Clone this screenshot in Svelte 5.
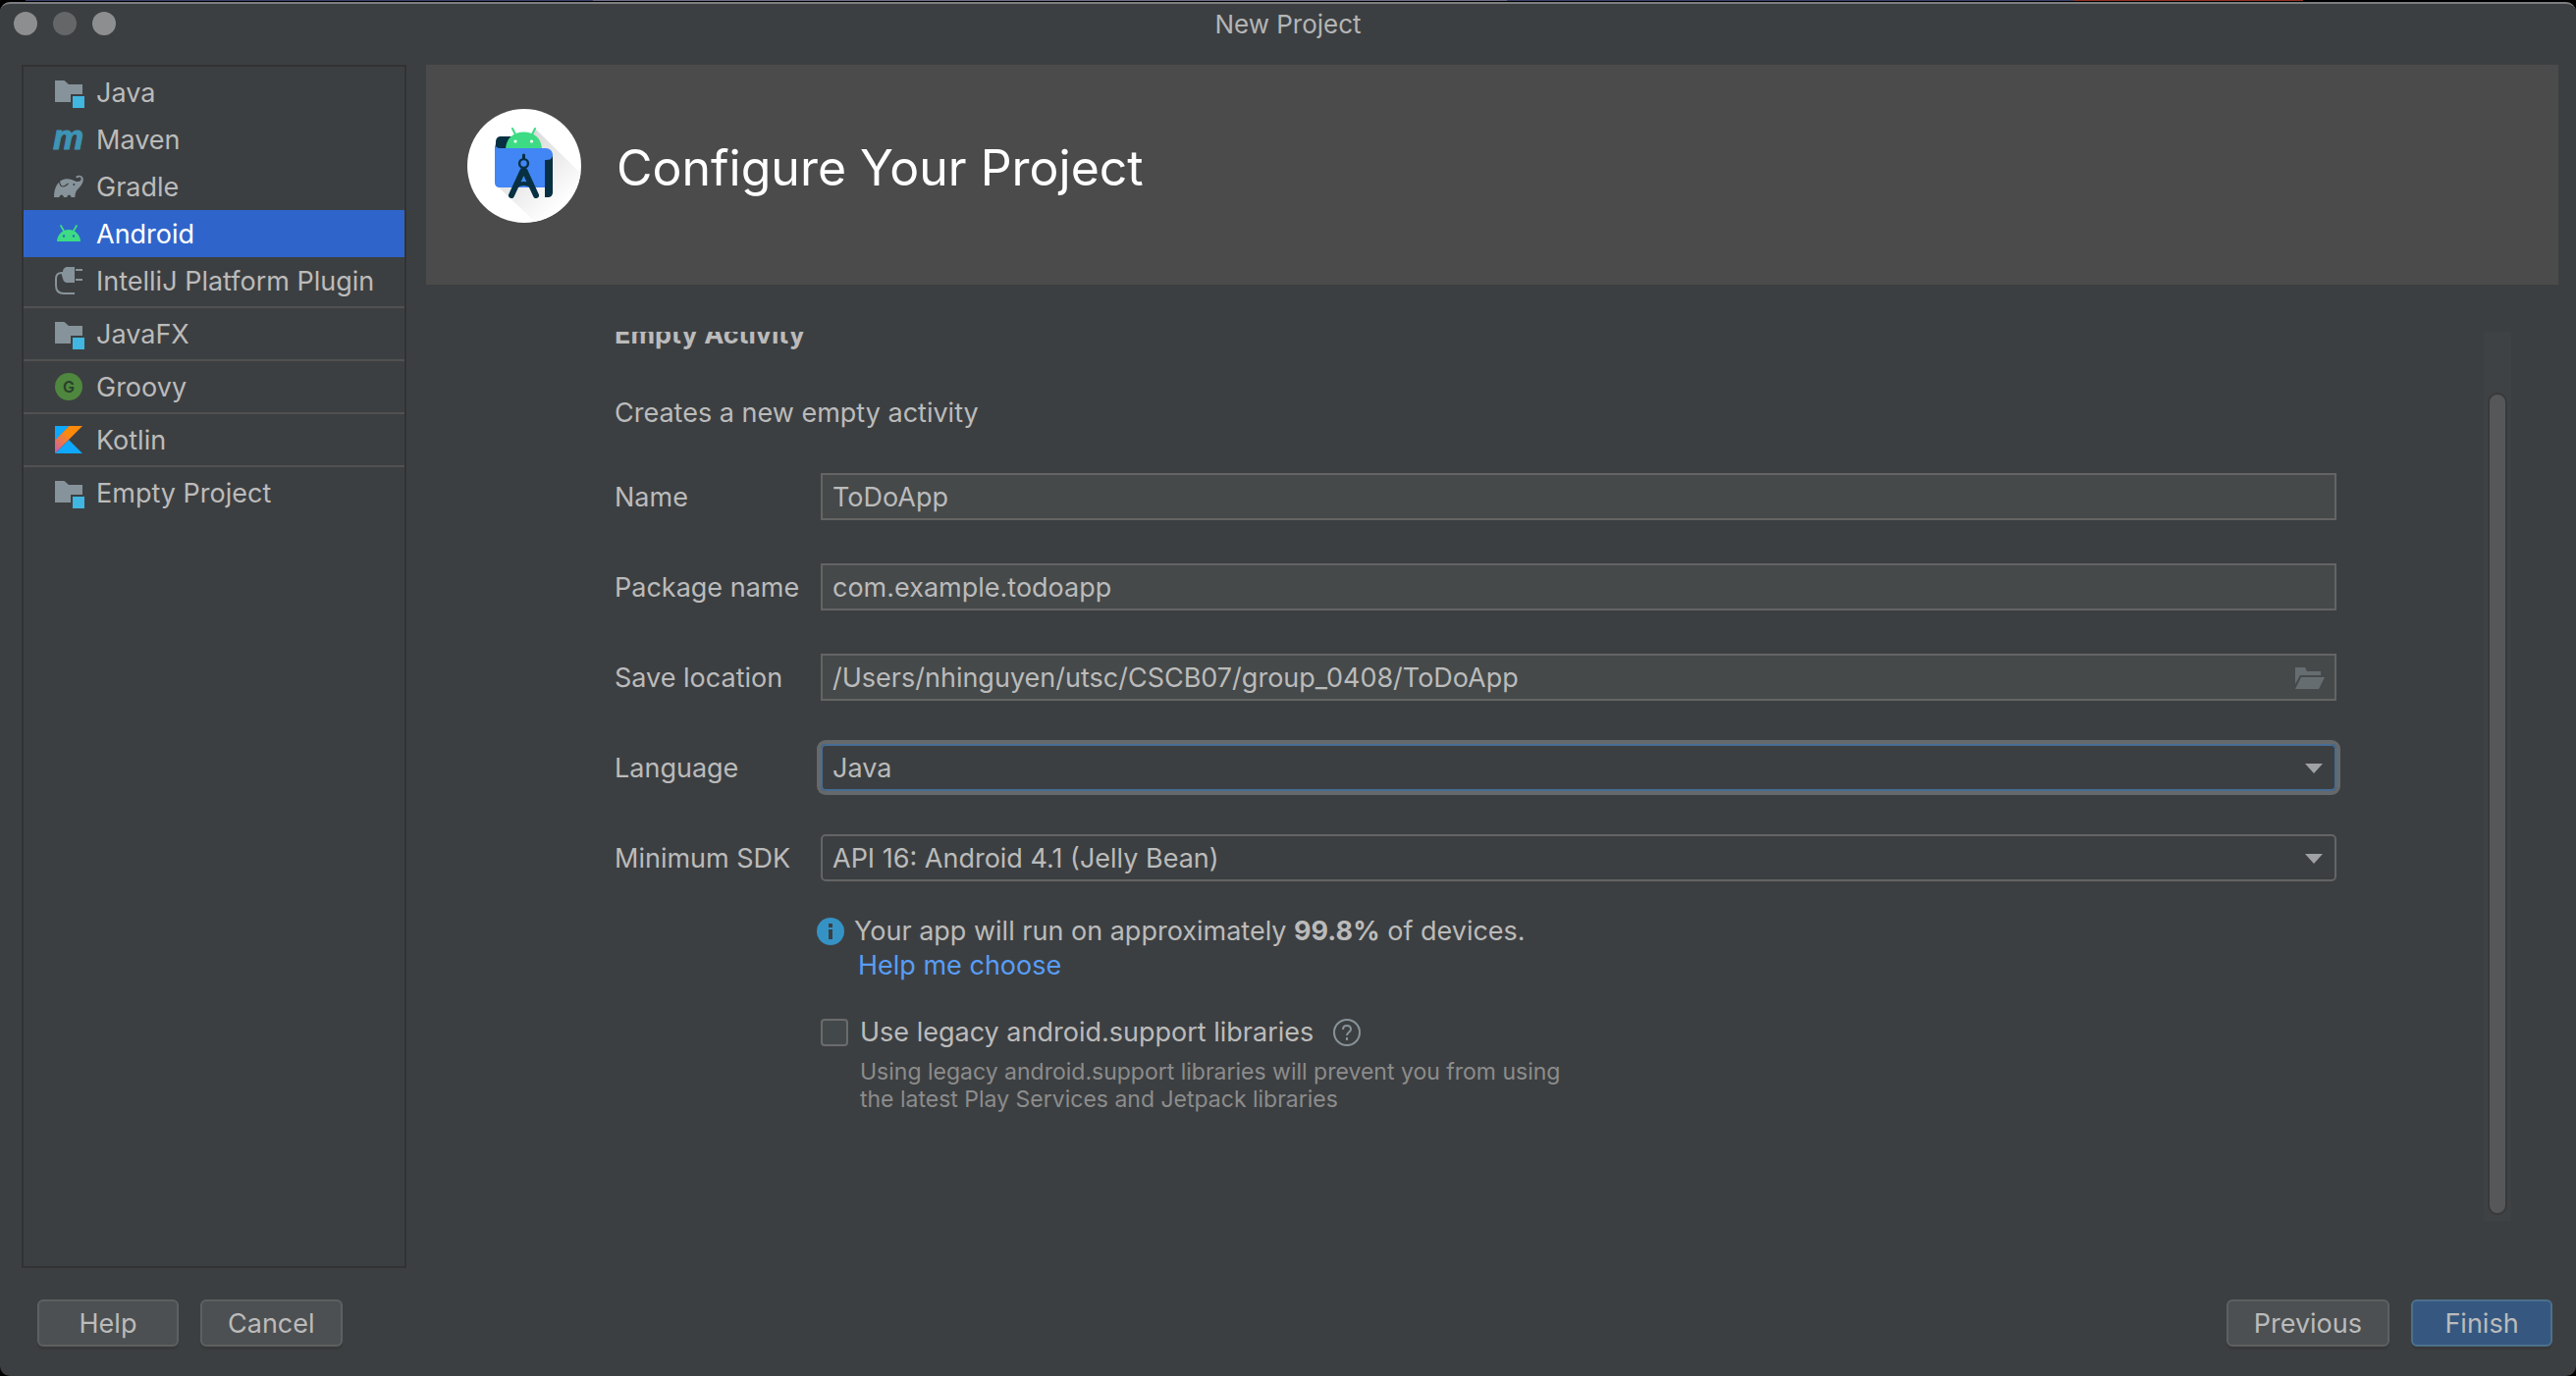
<script>
  const groups = [
    [
      { icon: 'folder', label: 'Java' },
      { icon: 'maven', label: 'Maven' },
      { icon: 'gradle', label: 'Gradle' },
      { icon: 'android', label: 'Android' },
      { icon: 'plugin', label: 'IntelliJ Platform Plugin' }
    ],
    [{ icon: 'folder', label: 'JavaFX' }],
    [{ icon: 'groovy', label: 'Groovy' }],
    [{ icon: 'kotlin', label: 'Kotlin' }],
    [{ icon: 'folder', label: 'Empty Project' }]
  ];
  let selected = $state('Android');
  let name = $state('ToDoApp');
  let packageName = $state('com.example.todoapp');
  let location = $state('/Users/nhinguyen/utsc/CSCB07/group_0408/ToDoApp');
  let language = $state('Java');
  let sdk = $state('API 16: Android 4.1 (Jelly Bean)');
  let legacy = $state(false);
</script>

{#snippet arrow()}
  <svg class="arrow" viewBox="0 0 18 10" aria-hidden="true"><path d="M0 0h18L9 10z" fill="#9fa1a4" /></svg>
{/snippet}

{#snippet itemIcon(kind)}
  <svg class="item-icon" viewBox="0 0 32 32" aria-hidden="true">
    {#if kind === 'folder'}
      <path d="M2 4h9.500l4.500 4h14v10H18v8H2z" fill="#87939a" />
      <path d="M20 20h12v12H20z" fill="#40b6e0" />
    {:else if kind === 'maven'}
      <text x="0" y="26" class="maven">m</text>
    {:else if kind === 'gradle'}
      <path d="M1 27C1 17 5 10 12 8.500C16 7.500 20 9 22.500 10.500C26 12 29 10.500 28.600 8C28.300 6.300 26 6.100 24.700 7.500L23 6.200C25 4 29 4.200 30.500 7C32 11.500 28 16 24.500 19.500C23 21.500 22.500 24 22.300 27H18.600C18 23.500 14.800 23.500 14.200 27H11C10.500 23.500 7 23.500 6.300 27Z" fill="#87939a" />
      <path d="M6.500 11c.5 3.500 1.500 5 3.500 5s4-1.500 5.500-3" fill="none" stroke="#3c3f41" stroke-width="1.200" />
      <circle cx="21.300" cy="14" r="1" fill="#3c3f41" />
    {:else if kind === 'android'}
      <path d="M8 8l3.500 6M24 8l-3.500 6" stroke="#3ddc84" stroke-width="1.800" stroke-linecap="round" />
      <path d="M4 24c.3-7 5.500-12 12-12s11.700 5 12 12z" fill="#3ddc84" />
      <circle cx="11" cy="18.500" r="1.200" fill="#2f65ca" /><circle cx="21" cy="18.500" r="1.200" fill="#2f65ca" />
    {:else if kind === 'plugin'}
      <path d="M22 2v16h-7c-3 0-5-2-5-5V7c0-3 2-5 5-5zM23 4h7v2h-7zM23 14h7v2h-7zM8 7h2v7z" fill="#87939a" />
      <path d="M9 8C5 8 3 10 3 14v7c0 5 3 8 8 8h11" fill="none" stroke="#87939a" stroke-width="2" />
    {:else if kind === 'groovy'}
      <circle cx="16" cy="16" r="14" fill="#4f873f" />
      <text x="16" y="22" class="groovy">G</text>
    {:else}
      <defs>
        <linearGradient id="kotlin-fill" x1="2" y1="30" x2="24" y2="4" gradientUnits="userSpaceOnUse">
          <stop offset="0" stop-color="#c757bc" /><stop offset=".3" stop-color="#e0706a" /><stop offset=".7" stop-color="#ff8a0a" />
        </linearGradient>
      </defs>
      <path d="M2 2h14.500L2 17zM2 30L16 16l14 14z" fill="#0ea9ff" />
      <path d="M16.500 2H30L2 30V16.500z" fill="url(#kotlin-fill)" />
    {/if}
  </svg>
{/snippet}

<div class="screen">
  <div class="backdrop"></div>
  <div class="window">
    <header class="titlebar">
      <div class="lights">
        <button class="light" aria-label="Close window"></button>
        <button class="light dim" aria-label="Minimize window"></button>
        <button class="light" aria-label="Zoom window"></button>
      </div>
      <span class="window-title">New Project</span>
    </header>

    <div class="content">
      <nav class="sidebar" aria-label="Project type">
        {#each groups as group}
          <ul>
            {#each group as item}
              <li>
                <button class="item" class:selected={selected === item.label} onclick={() => (selected = item.label)}>
                  {@render itemIcon(item.icon)}
                  <span>{item.label}</span>
                </button>
              </li>
            {/each}
          </ul>
        {/each}
      </nav>

      <main>
        <div class="banner">
          <svg class="logo" viewBox="0 0 116 116" aria-hidden="true">
            <defs>
              <linearGradient id="long-shadow" x1="30" y1="25" x2="95" y2="100" gradientUnits="userSpaceOnUse">
                <stop offset="0" stop-color="#cfcfcf" /><stop offset="1" stop-color="#ffffff" />
              </linearGradient>
              <clipPath id="disc"><circle cx="58" cy="58" r="58" /></clipPath>
            </defs>
            <circle cx="58" cy="58" r="58" fill="#fff" />
            <path d="M69 20L116 66V116H70L30 78z" fill="url(#long-shadow)" clip-path="url(#disc)" />
            <path d="M34 28h14v14H29V34c0-4 2-6 5-6z" fill="#073042" />
            <path d="M46 20l4 8M69 20l-4 8" stroke="#3ddc84" stroke-width="2" stroke-linecap="round" />
            <path d="M39 42C39 30 47 23.500 57.500 23.500S76 30 76 42z" fill="#3ddc84" />
            <circle cx="49" cy="33" r="1.600" fill="#fff" /><circle cx="65.500" cy="33" r="1.600" fill="#fff" />
            <path d="M28 34c0 4 2 6 6 6h46c4 0 7 3 7 7 0 3-2 5-6 5v28H33c-3 0-5-2-5-5z" fill="#4285f4" />
            <path d="M79 52c5 0 8-1 8-6v39c0 3-2 5-5 5h-3z" fill="#073042" />
            <path d="M57.500 47v6" stroke="#073042" stroke-width="3" stroke-linecap="round" />
            <path d="M56.500 63L45 88M58.500 63L70 88" stroke="#073042" stroke-width="6" stroke-linecap="round" />
            <path d="M49 79c5-4 12-4 17 0" fill="none" stroke="#073042" stroke-width="4" />
            <circle cx="57.500" cy="55.500" r="4.400" fill="#4285f4" stroke="#073042" stroke-width="2.400" />
          </svg>
          <h1>Configure Your Project</h1>
        </div>

        <div class="scroll-pane">
          <form class="form" onsubmit={(e) => e.preventDefault()}>
            <h2>Empty Activity</h2>
            <p class="intro">Creates a new empty activity</p>

            <div class="fields">
              <label for="name">Name</label>
              <div class="control"><input id="name" type="text" bind:value={name} /></div>

              <label for="package">Package name</label>
              <div class="control"><input id="package" type="text" bind:value={packageName} /></div>

              <label for="location">Save location</label>
              <div class="control">
                <input id="location" type="text" bind:value={location} />
                <button type="button" class="browse" aria-label="Browse for folder">
                  <svg viewBox="0 0 30 22" aria-hidden="true">
                    <path d="M0 0h10l2 4h14v4H5L0 17zM6 10h24l-6 12H0z" fill="#666d70" />
                  </svg>
                </button>
              </div>

              <label for="language">Language</label>
              <div class="control">
                <select id="language" class="active" bind:value={language}>
                  <option>Java</option>
                  <option>Kotlin</option>
                </select>
                {@render arrow()}
              </div>

              <label for="sdk">Minimum SDK</label>
              <div class="control">
                <select id="sdk" bind:value={sdk}>
                  <option>API 16: Android 4.1 (Jelly Bean)</option>
                </select>
                {@render arrow()}
              </div>
            </div>

            <div class="notes">
              <div class="info">
                <svg class="round-icon" viewBox="0 0 28 28" aria-hidden="true">
                  <circle cx="14" cy="14" r="14" fill="#3592c4" />
                  <path d="M12 6h4v4h-4zM12 12h4v10h-4z" fill="#3c3f41" />
                </svg>
                <p>Your app will run on approximately <strong>99.8%</strong> of devices.</p>
              </div>
              <a href="#help">Help me choose</a>

              <div class="legacy">
                <input id="legacy" type="checkbox" bind:checked={legacy} />
                <label for="legacy">Use legacy android.support libraries</label>
                <button type="button" class="hint" aria-label="About legacy libraries">
                  <svg class="round-icon" viewBox="0 0 28 28" aria-hidden="true">
                    <circle cx="14" cy="14" r="13" fill="none" stroke="#87939a" stroke-width="2" />
                    <path d="M10 11c0-2.500 1.500-4 4-4s4 1.500 4 3.700c0 3-4 3.300-4 6.300" fill="none" stroke="#87939a" stroke-width="2" />
                    <path d="M13 19h2v3h-2z" fill="#87939a" />
                  </svg>
                </button>
              </div>
              <p class="fine">Using legacy android.support libraries will prevent you from using<br />the latest Play Services and Jetpack libraries</p>
            </div>
          </form>
          <div class="track"><div class="thumb"></div></div>
        </div>
      </main>
    </div>

    <footer>
      <button class="action">Help</button>
      <button class="action">Cancel</button>
      <span class="spacer"></span>
      <button class="action">Previous</button>
      <button class="action primary">Finish</button>
    </footer>
  </div>
</div>

<style>
  :global(body) {
    background: #000;
  }
  .screen {
    box-sizing: border-box;
    min-height: 100vh;
    display: flex;
    flex-direction: column;
    font-family: Inter, 'Liberation Sans', sans-serif;
    font-size: 27px;
    line-height: 32px;
    color: #bbbbbb;
  }
  .screen *,
  .screen *::before {
    box-sizing: border-box;
  }
  button,
  input,
  select {
    font: inherit;
    color: inherit;
    margin: 0;
    padding: 0;
    border: 0;
    background: none;
    outline: none;
  }
  h1,
  h2,
  p,
  ul {
    margin: 0;
    padding: 0;
    font-weight: 400;
  }
  ul {
    list-style: none;
  }
  svg {
    display: block;
    flex: none;
  }
  .backdrop {
    height: 1px;
    margin-bottom: 1px;
    background: linear-gradient(90deg, #000 1%, #3c3f68 1% 23%, #6b6d86 23% 58.5%, #3c3f68 58.5% 80.5%, #8f2f28 80.5% 89.4%, #000 89.4%);
  }
  .window {
    flex: 1;
    display: flex;
    flex-direction: column;
    background: #3c3f41;
    border-top: 2px solid #7c7e7f;
    border-radius: 10px;
  }
  .titlebar {
    display: grid;
    grid-template-columns: 1fr auto 1fr;
    align-items: center;
    height: 40px;
    padding: 0 14px;
    font-size: 26px;
    color: #b4b5b6;
  }
  .window-title {
    padding-top: 2px;
  }
  .lights {
    display: flex;
    gap: 16px;
  }
  .light {
    width: 24px;
    height: 24px;
    border-radius: 50%;
    background: #8d8e90;
  }
  .light.dim {
    background: #656668;
  }
  .content {
    flex: 1;
    display: flex;
    gap: 20px;
    padding: 22px 18px 0 22px;
  }
  .sidebar {
    width: 392px;
    flex: none;
    border: 2px solid #323232;
  }
  .sidebar ul {
    padding: 2px 0;
  }
  .sidebar ul + ul {
    border-top: 2px solid #515151;
  }
  .item {
    display: flex;
    align-items: center;
    gap: 12px;
    width: 100%;
    height: 48px;
    padding: 0 30px;
    text-align: left;
    white-space: nowrap;
  }
  .item span {
    padding-top: 2px;
  }
  .item.selected {
    background: #2f65ca;
    color: #fff;
  }
  .item-icon {
    width: 32px;
    height: 32px;
    overflow: visible;
  }
  .maven {
    font: italic 800 35px 'Liberation Sans', sans-serif;
    fill: #3e94b5;
    stroke: #3e94b5;
    stroke-width: 1px;
  }
  .groovy {
    font: 600 16px Inter, sans-serif;
    fill: #29402a;
    text-anchor: middle;
  }
  main {
    flex: 1;
    min-width: 0;
    display: flex;
    flex-direction: column;
  }
  .banner {
    display: flex;
    align-items: center;
    gap: 36px;
    height: 224px;
    padding: 0 42px 18px;
    background: #4b4b4b;
    color: #fff;
  }
  .logo {
    width: 116px;
    height: 116px;
  }
  h1 {
    padding-top: 4px;
    font-size: 50px;
    line-height: 60px;
  }
  .scroll-pane {
    flex: 1;
    display: flex;
    justify-content: space-between;
    margin: 48px 48px 48px 192px;
    overflow: hidden;
  }
  .form {
    flex: 1;
    margin-right: 150px;
  }
  h2 {
    margin-top: -13px;
    font-size: 27px;
    font-weight: 700;
  }
  .intro {
    margin: 48px 0 45px;
  }
  .fields {
    display: grid;
    grid-template-columns: 210px 1fr;
    row-gap: 44px;
    align-items: center;
  }
  .fields label {
    padding-top: 2px;
  }
  .control {
    position: relative;
    height: 48px;
  }
  .control input,
  .control select {
    display: block;
    width: 100%;
    height: 48px;
    padding: 0 10px;
    border: 2px solid #646464;
  }
  .control input {
    background: #45494a;
  }
  .control select {
    appearance: none;
    padding-top: 2px;
    border-radius: 5px;
  }
  .control select.active {
    border-color: #466d94;
    box-shadow: 0 0 0 4px #66696b;
  }
  .control option {
    background: #3c3f41;
  }
  .arrow {
    position: absolute;
    right: 14px;
    top: 20px;
    width: 18px;
    height: 10px;
    pointer-events: none;
  }
  .browse {
    position: absolute;
    right: 12px;
    top: 14px;
  }
  .browse svg {
    width: 30px;
    height: 22px;
  }
  .notes {
    padding: 32px 0 0 206px;
  }
  .round-icon {
    width: 28px;
    height: 28px;
  }
  .info {
    display: flex;
    align-items: center;
    gap: 10px;
    height: 38px;
  }
  strong {
    font-weight: 700;
  }
  a {
    display: block;
    width: fit-content;
    margin-left: 42px;
    color: #589df6;
    text-decoration: none;
  }
  .legacy {
    display: flex;
    align-items: center;
    gap: 12px;
    margin: 36px 0 10px 4px;
  }
  .legacy input {
    appearance: none;
    width: 28px;
    height: 28px;
    border: 2px solid #6b6b6b;
    border-radius: 4px;
    background: #43494a;
  }
  .legacy input:checked {
    background: #589df6;
  }
  .hint {
    margin-left: 8px;
  }
  .fine {
    margin-left: 44px;
    font-size: 23px;
    line-height: 28px;
    color: #8c8c8c;
  }
  .track {
    width: 28px;
    padding: 62px 4px 6px;
    background: #3f4244;
  }
  .thumb {
    width: 20px;
    height: 100%;
    border: 2px solid #38393a;
    border-radius: 10px;
    background: #565758;
  }
  footer {
    display: flex;
    gap: 22px;
    padding: 32px 24px 30px 38px;
  }
  .spacer {
    flex: 1;
  }
  .action {
    min-width: 144px;
    height: 48px;
    padding: 2px 26px 0;
    border: 2px solid #5e6060;
    border-radius: 6px;
    background: #4c5052;
    box-shadow: 0 3px 0 #37393a;
  }
  .action.primary {
    border-color: #4c708c;
    background: #365880;
  }
</style>
